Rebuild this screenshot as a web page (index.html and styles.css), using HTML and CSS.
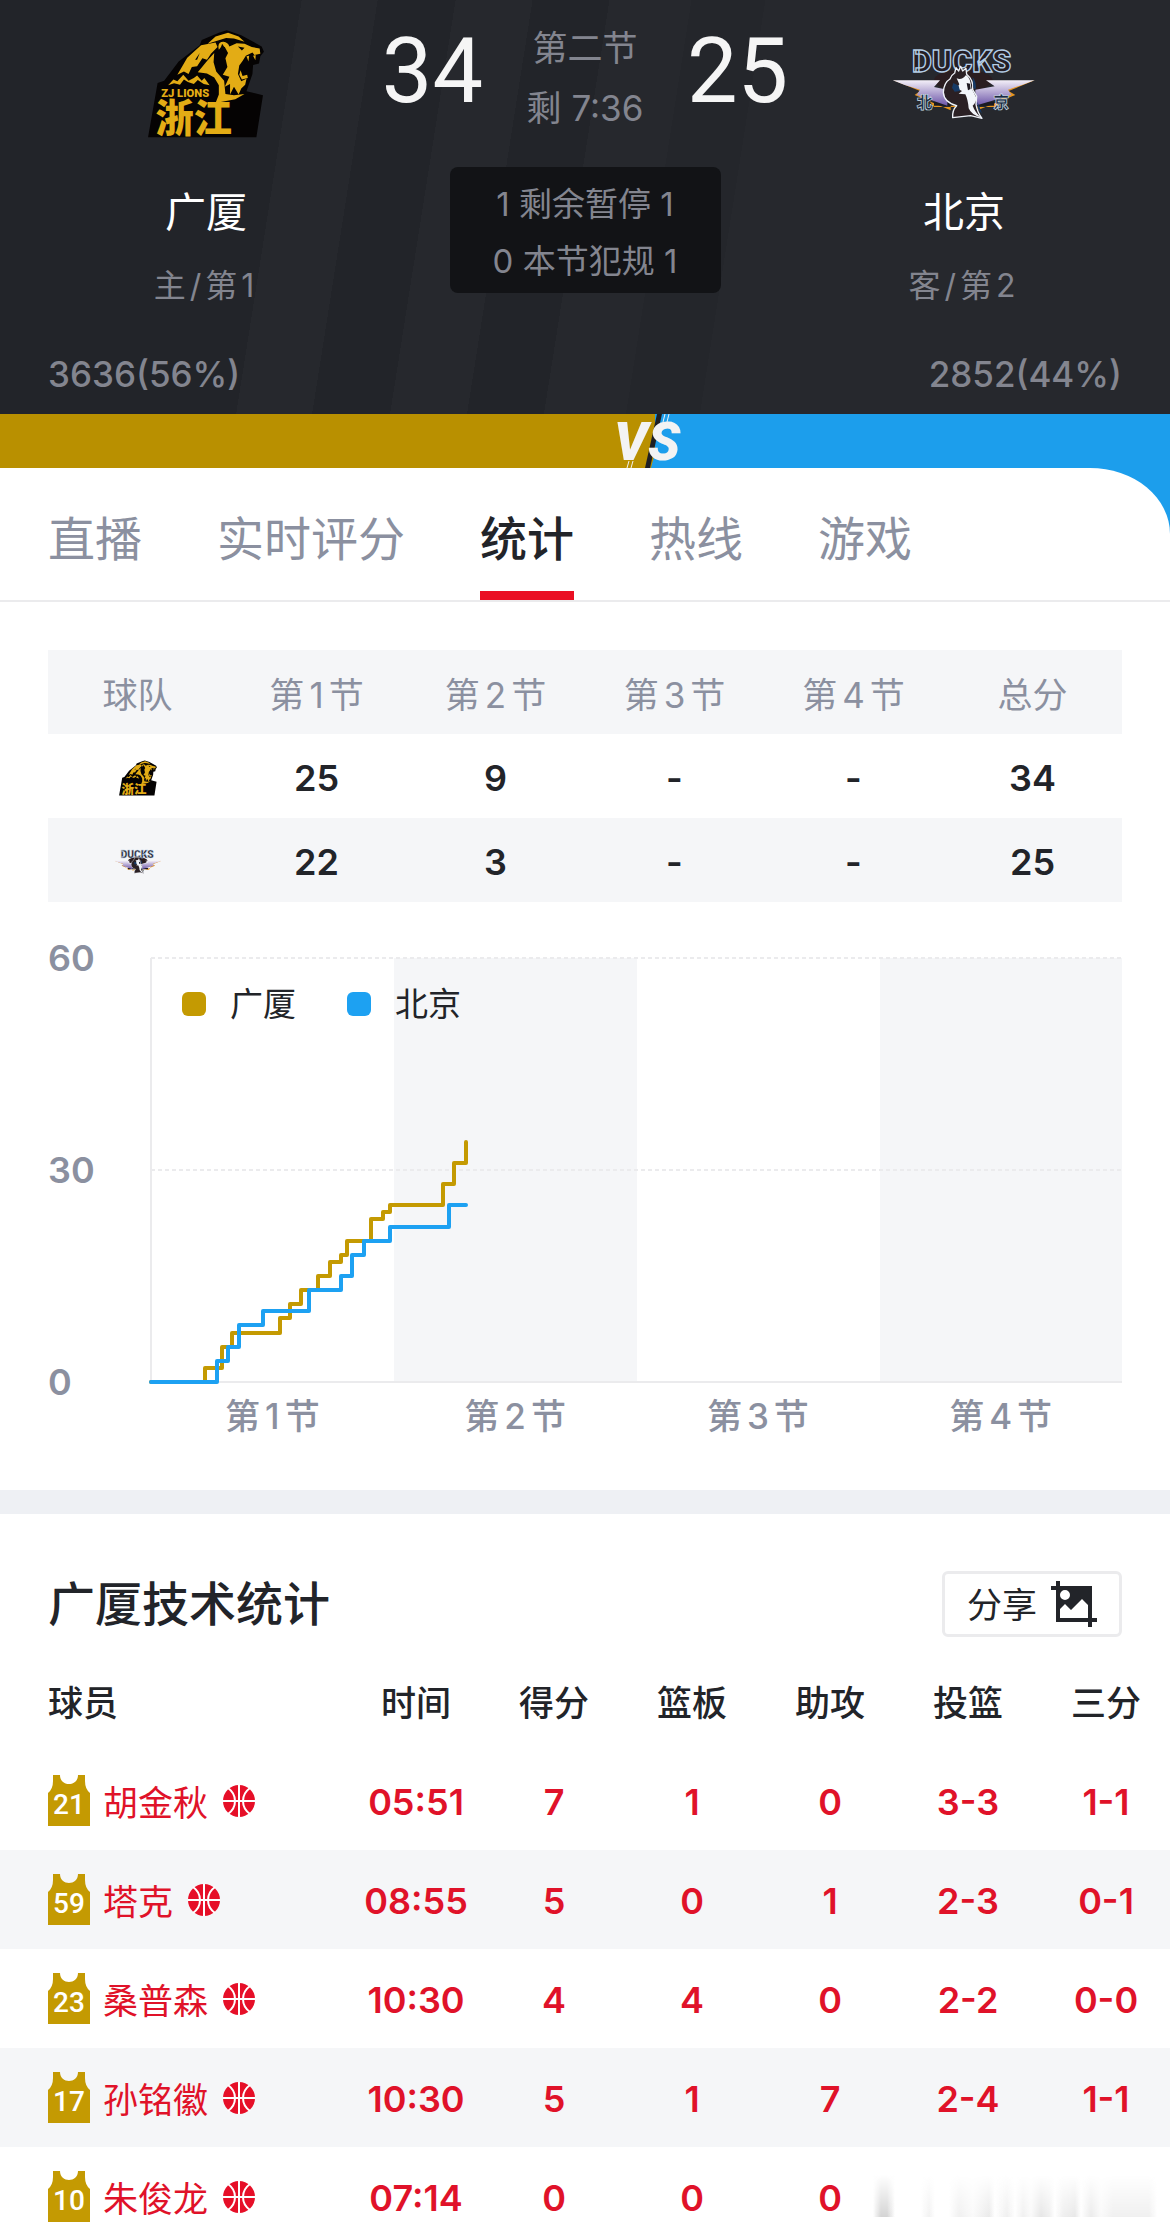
FILE: index.html
```html
<!DOCTYPE html>
<html lang="zh-CN">

<head>
    <meta charset="UTF-8">
    <meta name="viewport" content="width=device-width, initial-scale=1.0">
    <title>广厦 34 - 25 北京 | 统计</title>

    <link rel="stylesheet" href="styles.css">
</head>

<body>
    <!-- shared icons -->
    <svg class="sprite" width="0" height="0" aria-hidden="true">
        <defs>
            <linearGradient id="wing" x1="0" y1="0" x2="0" y2="1">
                <stop offset="0" stop-color="#f3eff8" />
                <stop offset="1" stop-color="#6c55a8" />
            </linearGradient>

            <g id="lions">
                <path fill="#050303" d="M57 368L86 203L106 196L150 138L214 88L220 72L272 50L296 43L340 58L402 92L409 108L398 122L394 144L376 148L374 176L356 228L406 240L386 368Z" />
                <g fill="#e3ac15">
                    <path d="M238 84L262 62L300 50L332 62L350 78L318 68L294 66L262 76Z" />
                    <path d="M146 178L176 126L218 88L262 80L268 94L248 114L236 132L222 128L206 152L190 154L180 176L166 168Z" />
                    <path d="M238 134L258 112L256 140L264 168L288 196L292 236L318 240L350 236L322 252L262 264L272 238L272 210L258 186L236 174L208 170Z" />
                    <path d="M272 102Q266 78 286 78Q300 80 304 92L326 82L350 84L372 94L396 98L398 114L380 118L374 110L354 120L344 136L334 150L330 176L340 198L356 190L352 208L340 220L332 238L318 214L306 238L306 206L290 214L304 184L284 178L298 154L292 128L300 112L290 94L280 92Z" />
                    <path d="M356 122L364 120L362 138ZM376 120L384 118L383 134ZM338 164L344 182L358 178L360 188L342 192L334 178Z" />
                    <path d="M118 210L134 192L146 198L164 178L180 196L196 188L206 180L220 196L228 188L244 210L226 206L208 194L196 206L178 200L166 192L154 208L136 204Z" />
                </g>
                <path fill="#050303" d="M330 92L350 96L342 104ZM214 112L200 132L206 132ZM282 84L290 96L284 106L278 96Z" />
            </g>

            <g id="ducks-wings">
                <ellipse cx="248" cy="150" rx="88" ry="32" fill="#2a1d20" />
                <path fill="#e6951f" d="M38 150L118 182L102 194L210 240V218H290V240L404 194L384 182L462 150L380 166L350 230H160L110 166Z" />
                <path fill="#1b1a20" d="M160 214H340V226H160Z" />
                <path fill="url(#wing)" d="M36 150H178L160 170L200 178V226L108 194L118 178L72 164ZM462 150H316L342 168L284 178V226L392 194L382 178L424 164Z" />
            </g>

            <g id="ducks-body">
                <path fill="#2a2024" stroke="#eef2f8" stroke-width="4" stroke-linejoin="round" d="M222 128L226 112L234 122L240 108L246 122L256 114L258 132Q280 150 276 178L288 198L286 222Q290 246 304 264L270 256L216 262Q214 240 228 226Q190 216 188 186Q190 156 208 146Q212 134 222 128Z" />
                <path fill="#f2f5fa" d="M228 144Q244 150 256 134Q270 142 272 174L286 200Q288 216 276 226Q284 248 302 262Q272 254 264 234Q262 208 254 192L234 190L244 182L228 174L236 162Z" />
                <path fill="#163a66" d="M218 158L234 166L238 182L222 184L214 172ZM276 140Q290 160 284 178L278 172ZM290 214L296 228L304 250L292 236Z" />
                <path fill="#1d1a22" d="M258 158L268 160L270 176L262 180Z" />
            </g>
        </defs>

        <symbol id="jersey" viewBox="0 0 42 51">
            <path fill="#c49a02" d="M5 0H12C12 12 30 12 30 0H37V6Q37 14 42 18V51H0V18Q5 14 5 6Z" />
        </symbol>

        <symbol id="ball" viewBox="0 0 32 32">
            <circle cx="16" cy="16" r="16" fill="#e60f28" />
            <path class="seam" fill="none" stroke-width="2" d="M16 0V32M0 16H32M5 3Q12 8 12 16T5 29M27 3Q20 8 20 16T27 29" />
        </symbol>
    </svg>

    <div class="app">
        <header class="match">
            <div class="match-top">
                <div class="team">
                    <svg class="team-logo" viewBox="56 42 354 328">
                        <use href="#lions" />
                        <text class="lions-name" x="97" y="247">ZJ LIONS</text>
                        <text class="lions-city" x="80" y="352">浙江</text>
                    </svg>
                    <p class="team-name">广厦</p>
                    <p class="team-rank">主<i>/</i>第<i>1</i></p>
                </div>

                <div class="board">
                    <div class="score-row">
                        <strong class="score">34</strong>
                        <div class="clock">
                            <p>第二节</p>
                            <p>剩 7:36</p>
                        </div>
                        <strong class="score">25</strong>
                    </div>
                    <div class="fouls">
                        <p>1 剩余暂停 1</p>
                        <p>0 本节犯规 1</p>
                    </div>
                </div>

                <div class="team">
                    <svg class="team-logo ducks" viewBox="34 52 432 218">
                        <use href="#ducks-wings" />
                        <text class="ducks-name" x="94" y="124">DUCKS</text>
                        <use href="#ducks-body" />
                        <text class="ducks-city" x="108" y="234">北</text>
                        <text class="ducks-city" x="338" y="234">京</text>
                    </svg>
                    <p class="team-name">北京</p>
                    <p class="team-rank">客<i>/</i>第<i>2</i></p>
                </div>
            </div>
            <div class="votes">
                <span>3636(56%)</span>
                <span>2852(44%)</span>
            </div>
        </header>

        <main class="content">
            <div class="vote-bar">
                <div class="vote-home" style="width: 56%"></div>
                <svg class="vs" viewBox="0 0 74 54" aria-hidden="true">
                    <path fill="#b99000" d="M42 0H46L32 54H42Z" />
                    <path fill="#1c9eec" d="M52 0L38 54H42V0Z" />
                    <path fill="#1d1f24" d="M44 0H49L37 54H32Z" />
                    <path stroke="#f3f3f3" stroke-width="1" d="M56 0L54 8M52 0L50 8M18 54L20 47M14 54L16 47" />
                    <text class="vs-text" x="1" y="46">VS</text>
                </svg>
            </div>

            <div class="panel">
                <nav class="tabs">
                    <a href="#live">直播</a>
                    <a href="#rating">实时评分</a>
                    <a href="#stats" class="active">统计</a>
                    <a href="#hot">热线</a>
                    <a href="#game">游戏</a>
                </nav>

                <section class="quarters" id="stats">
                    <table class="score-table">
                        <thead>
                            <tr>
                                <th>球队</th>
                                <th>第<i>1</i>节</th>
                                <th>第<i>2</i>节</th>
                                <th>第<i>3</i>节</th>
                                <th>第<i>4</i>节</th>
                                <th>总分</th>
                            </tr>
                        </thead>
                        <tbody>
                            <tr>
                                <td>
                                    <svg class="mini-logo" viewBox="56 42 354 328">
                                        <use href="#lions" />
                                        <text class="lions-city" x="80" y="352">浙江</text>
                                    </svg>
                                </td>
                                <td>25</td>
                                <td>9</td>
                                <td>-</td>
                                <td>-</td>
                                <td>34</td>
                            </tr>
                            <tr>
                                <td>
                                    <svg class="mini-logo mini-ducks" viewBox="34 52 432 218">
                                        <use href="#ducks-wings" />
                                        <text class="ducks-name" x="94" y="124">DUCKS</text>
                                        <use href="#ducks-body" />
                                    </svg>
                                </td>
                                <td>22</td>
                                <td>3</td>
                                <td>-</td>
                                <td>-</td>
                                <td>25</td>
                            </tr>
                        </tbody>
                    </table>

                    <div class="chart">
                        <div class="y-axis">
                            <span>60</span>
                            <span>30</span>
                            <span>0</span>
                        </div>
                        <div class="plot">
                            <svg class="lines" viewBox="0 0 971 424" preserveAspectRatio="none">
                                <path class="band" d="M243 0H486V424H243ZM729 0H971V424H729Z" />
                                <path class="grid dashed" d="M0 0H971M0 212H971" />
                                <path class="grid" d="M0 0V424H971" />
                                <path class="line home" d="M0 424H54V410H71V389H81V375H129V360H139V346H150V332H167V318H179V304H190V297H196V283H220V261H232V254H239V247H292V226H303V205H315V184" />
                                <path class="line away" d="M0 424H66V403H77V389H88V367H112V353H158V332H190V318H201V297H213V283H239V269H298V247H315" />
                            </svg>
                            <div class="legend">
                                <span class="key home">广厦</span>
                                <span class="key away">北京</span>
                            </div>
                        </div>
                        <div class="x-axis">
                            <span>第<i>1</i>节</span>
                            <span>第<i>2</i>节</span>
                            <span>第<i>3</i>节</span>
                            <span>第<i>4</i>节</span>
                        </div>
                    </div>
                </section>

                <section class="players">
                    <div class="players-head">
                        <h2>广厦技术统计</h2>
                        <button class="share" type="button">
                            <span>分享</span>
                            <svg width="46" height="46" viewBox="0 0 46 46" aria-hidden="true">
                                <path fill="#222429" fill-rule="evenodd" d="M5 0H9V5H41V37H46V41H41V46H37V41H5V9H0V5H5ZM9 28V37H37V24L31 18L20 29L14 23ZM14 9A5 5 0 0 0 14 19A5 5 0 0 0 14 9Z" />
                            </svg>
                        </button>
                    </div>

                    <div class="table-scroll">
                        <table class="player-table">
                            <thead>
                                <tr>
                                    <th class="name-col">球员</th>
                                    <th>时间</th>
                                    <th>得分</th>
                                    <th>篮板</th>
                                    <th>助攻</th>
                                    <th>投篮</th>
                                    <th>三分</th>
                                </tr>
                            </thead>
                            <tbody>
                                <tr>
                                    <td><div class="player"><svg class="jersey"><use href="#jersey" /><text x="21" y="39">21</text></svg><span>胡金秋</span><svg class="ball"><use href="#ball" /></svg></div></td>
                                    <td>05:51</td>
                                    <td>7</td>
                                    <td>1</td>
                                    <td>0</td>
                                    <td>3-3</td>
                                    <td>1-1</td>
                                </tr>
                                <tr>
                                    <td><div class="player"><svg class="jersey"><use href="#jersey" /><text x="21" y="39">59</text></svg><span>塔克</span><svg class="ball"><use href="#ball" /></svg></div></td>
                                    <td>08:55</td>
                                    <td>5</td>
                                    <td>0</td>
                                    <td>1</td>
                                    <td>2-3</td>
                                    <td>0-1</td>
                                </tr>
                                <tr>
                                    <td><div class="player"><svg class="jersey"><use href="#jersey" /><text x="21" y="39">23</text></svg><span>桑普森</span><svg class="ball"><use href="#ball" /></svg></div></td>
                                    <td>10:30</td>
                                    <td>4</td>
                                    <td>4</td>
                                    <td>0</td>
                                    <td>2-2</td>
                                    <td>0-0</td>
                                </tr>
                                <tr>
                                    <td><div class="player"><svg class="jersey"><use href="#jersey" /><text x="21" y="39">17</text></svg><span>孙铭徽</span><svg class="ball"><use href="#ball" /></svg></div></td>
                                    <td>10:30</td>
                                    <td>5</td>
                                    <td>1</td>
                                    <td>7</td>
                                    <td>2-4</td>
                                    <td>1-1</td>
                                </tr>
                                <tr>
                                    <td><div class="player"><svg class="jersey"><use href="#jersey" /><text x="21" y="39">10</text></svg><span>朱俊龙</span><svg class="ball"><use href="#ball" /></svg></div></td>
                                    <td>07:14</td>
                                    <td>0</td>
                                    <td>0</td>
                                    <td>0</td>
                                    <td></td>
                                    <td></td>
                                </tr>
                            </tbody>
                        </table>
                    </div>
                </section>
            </div>
        </main>

        <div class="smudge"></div>
    </div>
</body>

</html>
```

FILE: styles.css
```css
:root {
    --dark: #222429;
    --muted: #8b90a0;
    --gold: #c49a02;
    --blue: #1da1f2;
    --red: #e01229;
    --stripe: #f5f6f8;
    --line: #ebebed;
}

* {
    margin: 0;
    padding: 0;
    box-sizing: border-box;
}

body {
    background-color: #fff;
    color: var(--dark);
    font-family: Inter, "Noto Sans CJK SC", sans-serif;
    font-size: 35px;
}

i {
    font-style: normal;
    margin: 0 5px;
}

.sprite {
    position: absolute;
}

.app {
    position: relative;
    height: 100vh;
    overflow: hidden;
}

/* match header */
.match {
    padding: 0 48px 18px;
    color: #83858f;
    background: linear-gradient(99deg, #222429 298px, #26282d 298px, #26282d 373px, #222429 373px, #222429 450px, #26282d 450px, #26282d 526px, #222429 526px, #222429 602px, #26282d 602px, #26282d 683px, #24262b 683px, #24262b 756px, #26282d 756px);
}

.match-top {
    display: grid;
    grid-template-columns: 1fr 414px 1fr;
    margin: 0 -14px;
}

.team {
    display: flex;
    flex-direction: column;
    align-items: center;
    padding-top: 30px;
}

.team-logo {
    width: 118px;
    height: 108px;
    overflow: visible;
}

.team-logo.ducks {
    width: 144px;
}

.team-name {
    margin-top: 46px;
    color: #fff;
    font-size: 41px;
    line-height: 56px;
}

.team-rank {
    margin-top: 24px;
    font-size: 32px;
    line-height: 44px;
}

.team-rank i {
    margin: 0 4px;
}

.board {
    display: flex;
    flex-direction: column;
    align-items: center;
    padding-top: 18px;
}

.score-row {
    display: flex;
    justify-content: center;
    gap: 43px;
    height: 120px;
}

.score {
    color: #f5f5f5;
    font-family: Roboto, sans-serif;
    font-size: 90px;
    font-weight: 400;
    line-height: 108px;
}

.clock {
    width: 118px;
    line-height: 60px;
    text-align: center;
    white-space: nowrap;
}

.fouls {
    width: 271px;
    margin-top: 29px;
    padding: 9px 0 3px;
    border-radius: 8px;
    background-color: #121316;
    font-size: 33px;
    line-height: 57px;
    text-align: center;
}

.votes {
    display: flex;
    justify-content: space-between;
    margin-top: 44px;
    font-weight: 500;
    line-height: 44px;
}

/* vote bar */
.content {
    background-color: #1c9eec;
}

.vote-bar {
    display: flex;
    height: 54px;
}

.vote-home {
    background-color: #b99000;
}

.vs {
    width: 74px;
    height: 54px;
    margin-left: -42px;
}

.vs-text {
    fill: #f3f3f3;
    font: italic 900 53px Roboto, sans-serif;
}

/* tabs */
.panel {
    border-top-right-radius: 80px 66px;
    background-color: #fff;
}

.tabs {
    display: flex;
    gap: 75px;
    padding: 0 48px;
    border-bottom: 2px solid var(--line);
}

.tabs a {
    padding: 39px 0 20px;
    border-bottom: 9px solid transparent;
    color: var(--muted);
    font-size: 47px;
    line-height: 64px;
    text-decoration: none;
}

.tabs .active {
    border-color: #ea0f23;
    color: var(--dark);
    font-weight: 500;
}

/* quarter scores */
.quarters {
    padding: 48px 48px 52px;
    border-bottom: 24px solid #eef0f4;
}

.score-table {
    width: 100%;
    border-collapse: collapse;
    table-layout: fixed;
    text-align: center;
}

.score-table th {
    color: var(--muted);
    font-weight: 400;
}

.score-table th,
.score-table td {
    height: 84px;
}

.score-table td {
    padding-top: 3px;
    font-size: 36px;
    font-weight: 600;
}

.score-table thead tr,
.score-table tbody tr:nth-child(even) {
    background-color: var(--stripe);
}

.mini-logo {
    display: block;
    width: 38px;
    height: 36px;
    margin: 0 auto;
    overflow: visible;
}

.mini-logo.mini-ducks {
    width: 48px;
}

.chart {
    display: grid;
    grid-template-columns: 103px 1fr;
    margin-top: 56px;
    color: var(--muted);
    font-weight: 500;
}

.y-axis {
    display: flex;
    flex-direction: column;
    justify-content: space-between;
    margin: -20px 0;
    font-size: 36px;
    font-weight: 600;
    line-height: 40px;
}

.plot {
    position: relative;
    height: 424px;
}

.lines {
    display: block;
    width: 100%;
    height: 100%;
    overflow: visible;
}

.band {
    fill: var(--stripe);
}

.grid {
    fill: none;
    stroke: var(--line);
    stroke-width: 2;
}

.grid.dashed {
    stroke-dasharray: 4 3;
}

.line {
    fill: none;
    stroke-width: 4;
    stroke-linecap: round;
    stroke-linejoin: round;
}

.line.home {
    stroke: var(--gold);
}

.line.away {
    stroke: var(--blue);
}

.legend {
    position: absolute;
    top: 24px;
    left: 31px;
    display: flex;
    gap: 51px;
    color: var(--dark);
    font-size: 33px;
    font-weight: 400;
    line-height: 44px;
}

.key {
    display: flex;
    align-items: center;
    gap: 24px;
}

.key::before {
    content: "";
    width: 24px;
    height: 24px;
    border-radius: 6px;
    background-color: var(--gold);
}

.key.away::before {
    background-color: var(--blue);
}

.x-axis {
    grid-column: 2;
    display: grid;
    grid-template-columns: repeat(4, 1fr);
    margin-top: 12px;
    line-height: 44px;
    text-align: center;
}

/* player stats */
.players-head {
    display: flex;
    align-items: center;
    justify-content: space-between;
    padding: 57px 48px 18px;
}

.players-head h2 {
    font-size: 47px;
    font-weight: 500;
    line-height: 64px;
}

.share {
    display: flex;
    align-items: center;
    gap: 14px;
    height: 66px;
    padding: 0 22px;
    border: 3px solid var(--line);
    border-radius: 6px;
    background-color: #fff;
    color: var(--dark);
    font: inherit;
}

.share span {
    padding-bottom: 4px;
}

.table-scroll {
    overflow: hidden;
}

.player-table {
    width: 100%;
    min-width: 1175px;
    border-collapse: collapse;
    table-layout: fixed;
    text-align: center;
}

.player-table th {
    width: 138px;
    height: 96px;
    padding-bottom: 6px;
    font-weight: 500;
}

.player-table .name-col {
    width: auto;
    padding-left: 48px;
    text-align: left;
}

.player-table td {
    height: 99px;
    color: var(--red);
    font-size: 36px;
    font-weight: 600;
}

.player-table td + td {
    padding-top: 3px;
}

.player-table tbody tr:nth-child(even) {
    background-color: var(--stripe);
}

.player {
    display: flex;
    align-items: center;
    padding-left: 48px;
    font-size: 35px;
    font-weight: 400;
}

.jersey {
    width: 42px;
    height: 51px;
    margin-right: 13px;
}

.jersey text {
    fill: #fff;
    font: 500 28px Roboto, sans-serif;
    text-anchor: middle;
}

.ball {
    width: 32px;
    height: 32px;
    margin-left: 15px;
}

.seam {
    stroke: #fff;
}

/* text inside the logos */
.lions-name {
    fill: #e3ac15;
    font: 900 34px Roboto, sans-serif;
}

.lions-city {
    fill: #e3ac15;
    font: 900 140px "Noto Sans CJK SC", sans-serif;
    font-size: 116px;
}

.ducks-name {
    fill: #241d22;
    stroke: #b4cde6;
    stroke-width: 4;
    font: 900 92px Roboto, sans-serif;
}

.ducks-city {
    fill: #1d2a40;
    stroke: #d5e2f0;
    stroke-width: 2;
    font: 900 48px "Noto Sans CJK SC", sans-serif;
}

/* faded corner strip */
.smudge {
    position: absolute;
    right: 13px;
    bottom: 12px;
    width: 284px;
    height: 42px;
    background: linear-gradient(90deg, transparent, #d4d4d4 8px, #d4d4d4 14px, transparent 22px, transparent 48px, #f2f2f2 56px, transparent 62px, transparent 76px, #f0f0f0 86px, #fafafa 100px, #eaeaea 116px, transparent 122px, #efefef 134px, transparent 142px, #f0f0f0 150px, #fafafa 158px, #e6e6e6 168px, #efefef 176px, transparent 182px, #efefef 190px, #e8e8e8 202px, transparent 208px, #ebebeb 218px, #fafafa 228px, #f0f0f0 240px, #f0f0f0 276px, transparent);
    -webkit-mask-image: linear-gradient(transparent, #000);
    mask-image: linear-gradient(transparent, #000);
}
```
